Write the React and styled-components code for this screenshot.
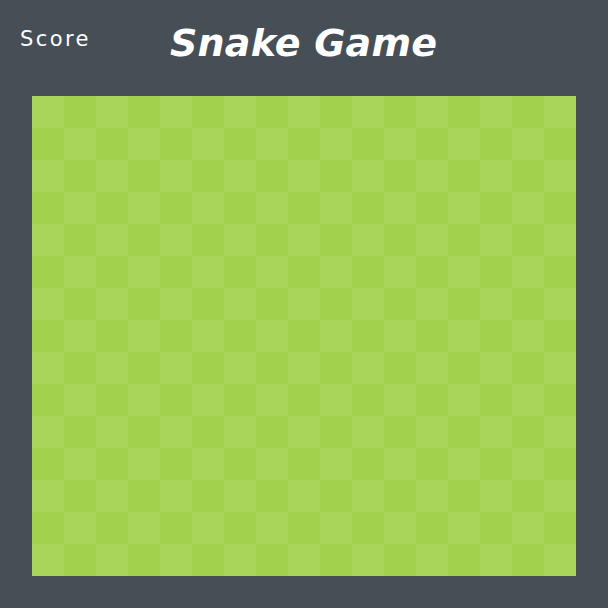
import React from "react";
import styled, { createGlobalStyle } from "styled-components";

const Global = createGlobalStyle`
  html, body { margin: 0; padding: 0; }
  body {
    width: 608px;
    height: 608px;
    overflow: hidden;
    background: #464e56;
    font-family: "DejaVu Sans", "Liberation Sans", sans-serif;
  }
`;

const Page = styled.div`
  width: 608px;
  height: 608px;
  display: flex;
  flex-direction: column;
`;

const Header = styled.header`
  height: 96px;
  display: flex;
  align-items: flex-start;
  padding-left: 20px;
  box-sizing: border-box;
`;

const ScoreLabel = styled.div`
  color: #ffffff;
  font-size: 21px;
  line-height: 1;
  margin-top: 29px;
  width: 150px;
  letter-spacing: 2.4px;
`;

const Title = styled.h1`
  margin: 0;
  margin-top: 24px;
  color: #ffffff;
  font-size: 38px;
  line-height: 1;
  font-weight: bold;
  font-style: italic;
  letter-spacing: 0.2px;
`;

const Board = styled.div`
  margin-left: 32px;
  width: 544px;
  height: 480px;
  display: grid;
  grid-template-columns: repeat(17, 32px);
  grid-template-rows: repeat(15, 32px);
`;

const Cell = styled.div`
  background: ${(p) => (p.$light ? "#a8d55a" : "#a2d14b")};
`;

const COLS = 17;
const ROWS = 15;

export default function App() {
  const cells = [];
  for (let r = 0; r < ROWS; r++) {
    for (let c = 0; c < COLS; c++) {
      cells.push(<Cell key={`${r}-${c}`} $light={(r + c) % 2 === 0} />);
    }
  }
  return (
    <>
      <Global />
      <Page>
        <Header>
          <ScoreLabel>Score</ScoreLabel>
          <Title>Snake Game</Title>
        </Header>
        <Board>{cells}</Board>
      </Page>
    </>
  );
}
